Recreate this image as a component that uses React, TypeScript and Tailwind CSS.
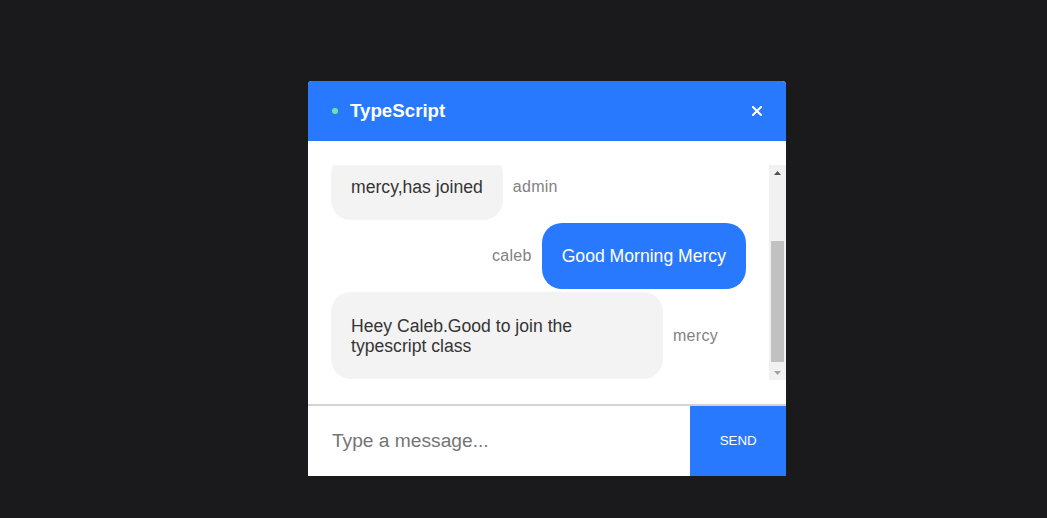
import React, { useEffect, useRef } from 'react';

type Msg = { user: string; text: string };

const me = 'caleb';

const messages: Msg[] = [
    { user: 'admin', text: 'caleb, welcome to the room typescript' },
    { user: 'admin', text: 'mercy,has joined' },
    { user: 'caleb', text: 'Good Morning Mercy' },
    { user: 'mercy', text: 'Heey Caleb.Good to join the typescript class' },
];

const Message: React.FC<{ msg: Msg }> = ({ msg }) => {
    if (msg.user === me) {
        return (
            <div className="flex justify-end px-[5%] mt-[3px]">
                <p className="flex items-center pr-[10px] text-[#828282] tracking-[0.3px]">{msg.user}</p>
                <div className="inline-block max-w-[80%] rounded-[20px] bg-[#2979ff] px-5 py-[5.5px]">
                    <p className="my-[1em] text-[1.1em] leading-[1.15] text-white break-words">{msg.text}</p>
                </div>
            </div>
        );
    }
    return (
        <div className="flex justify-start px-[5%] mt-[3px]">
            <div className="inline-block max-w-[80%] rounded-[20px] bg-[#f3f3f3] px-5 py-[5.5px]">
                <p className="my-[1em] text-[1.1em] leading-[1.15] text-[#353535] break-words">{msg.text}</p>
            </div>
            <p className="flex items-center pl-[10px] text-[#828282] tracking-[0.3px]">{msg.user}</p>
        </div>
    );
};

// classic scrollbar, scrolled to the bottom
const ScrollBar: React.FC = () => (
    <div className="flex w-[17px] flex-col bg-[#f1f1f1]">
        <div className="flex h-[15px] items-center justify-center">
            <svg width="7" height="4" viewBox="0 0 7 4">
                <path d="M3.5 0L7 4H0Z" fill="#505050" />
            </svg>
        </div>
        <div className="flex-1 pt-[61px]">
            <div className="mx-[2px] h-[121px] bg-[#c1c1c1]"></div>
        </div>
        <div className="flex h-[15px] items-center justify-center">
            <svg width="7" height="4" viewBox="0 0 7 4">
                <path d="M0 0H7L3.5 4Z" fill="#a3a3a3" />
            </svg>
        </div>
    </div>
);

export default function App() {
    const scrollRef = useRef<HTMLDivElement>(null);

    useEffect(() => {
        if (scrollRef.current) scrollRef.current.scrollTop = scrollRef.current.scrollHeight;
    }, []);

    return (
        <div className="h-[518px] bg-[#1a1a1d] pt-[81px] pl-[308px] font-['Liberation_Sans',Arial,sans-serif]">
            <div className="flex w-[478px] flex-col rounded-t-[4px] bg-white">
                {/* info bar */}
                <div className="flex h-[60px] items-center justify-between rounded-t-[4px] bg-[#2979ff]">
                    <div className="ml-[24px] flex items-center text-white">
                        <span className="mr-[12px] inline-block h-[6px] w-[6px] rounded-full bg-[#6ee2a6]"></span>
                        <h3 className="text-[18.72px] font-bold">TypeScript</h3>
                    </div>
                    <div className="mr-[24px] flex items-center">
                        <svg width="10" height="10" viewBox="0 0 10 10">
                            <path d="M1 1L9 9M9 1L1 9" stroke="white" strokeWidth="2" strokeLinecap="square" />
                        </svg>
                    </div>
                </div>

                {/* messages */}
                <div className="flex h-[263px] py-[24px]">
                    <div ref={scrollRef} className="h-[215px] w-[461px] overflow-hidden">
                        <div className="pb-[1px]">
                            {messages.map((m, i) => (
                                <Message key={i} msg={m} />
                            ))}
                        </div>
                    </div>
                    <ScrollBar />
                </div>

                {/* input */}
                <form className="flex border-t-2 border-[#d3d3d3]" onSubmit={(e) => e.preventDefault()}>
                    <input
                        className="w-[80%] rounded-none border-none p-[5%] text-[1.2em] leading-[1.15] text-[#353535] outline-none placeholder:text-[#757575]"
                        type="text"
                        placeholder="Type a message..."
                    />
                    <button className="w-[20%] bg-[#2979ff] p-5 text-[13.33px] uppercase text-white">Send</button>
                </form>
            </div>
        </div>
    );
}
